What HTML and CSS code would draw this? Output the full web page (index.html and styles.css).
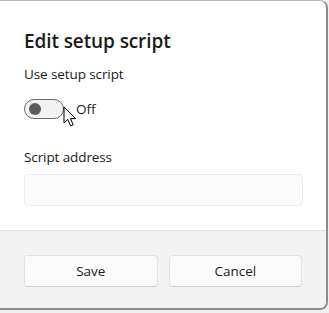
FILE: index.html
```html
<!DOCTYPE html>
<html>
<head>
<meta charset="utf-8">
<link rel="stylesheet" href="styles.css">
</head>
<body>
<div class="dialog">
  <div class="content">
    <h1 class="title">Edit setup script</h1>
    <div class="label">Use setup script</div>
    <div class="toggle-row">
      <span class="toggle"><span class="knob"></span></span>
      <span class="toggle-text">Off</span>
      <svg class="cursor" width="14" height="22" viewBox="0 0 14 22">
        <path d="M1 1 L1 17 L4.8 13.4 L7.6 20 L10.2 18.9 L7.5 12.6 L12.6 12.6 Z" fill="#fff" stroke="#000" stroke-width="1" stroke-linejoin="round"/>
      </svg>
    </div>
    <div class="label addr">Script address</div>
    <div class="input"></div>
  </div>
  <div class="footer">
    <button class="btn">Save</button>
    <button class="btn">Cancel</button>
  </div>
</div>
</body>
</html>
```
FILE: styles.css
```css
* { box-sizing: border-box; }
html, body { margin: 0; padding: 0; }
body {
  width: 329px;
  height: 313px;
  background: #f0f0f0;
  font-family: "Open Sans", "Noto Sans", "Liberation Sans", sans-serif;
  color: #1b1b1b;
  overflow: hidden;
}
.dialog {
  width: 328px;
  height: 310px;
  background: #fff;
  border-top: 1px solid #b8b8b8;
  border-right: 2px solid #8c8c8c;
  border-bottom: 2px solid #8c8c8c;
  border-radius: 0 8px 8px 0;
  display: flex;
  flex-direction: column;
  overflow: hidden;
}
.content {
  padding: 0 24px;
  height: 229px;
  flex: none;
}
.title {
  margin: 0;
  padding-top: 27px;
  font-size: 19px;
  font-weight: 600;
  line-height: 26px;
  letter-spacing: -0.1px;
}
.label {
  margin-top: 10px;
  font-size: 13.5px;
  line-height: 20px;
  letter-spacing: -0.1px;
}
.toggle-row {
  display: flex;
  align-items: center;
  margin-top: 14px;
  height: 22px;
  position: relative;
}
.toggle {
  width: 40px;
  height: 20px;
  border: 1px solid #6a6a6a;
  border-radius: 10px;
  background: #f2f2f2;
  display: flex;
  align-items: center;
  padding-left: 4px;
}
.knob {
  width: 12px;
  height: 12px;
  border-radius: 50%;
  background: #5b5b5b;
}
.toggle-text {
  margin-left: 12px;
  font-size: 13.5px;
}
.cursor {
  position: absolute;
  left: 39px;
  top: 8px;
}
.addr { margin-top: 27px; }
.input {
  margin-top: 7px;
  height: 32px;
  width: 279px;
  border: 1px solid #ececec;
  border-radius: 4px;
  background: #fbfbfb;
}
.footer {
  flex: 1;
  background: #f3f3f3;
  border-top: 1px solid #e3e3e3;
  display: flex;
  gap: 11px;
  padding: 24px 24px 0 24px;
}
.btn {
  width: 134px;
  height: 32px;
  background: #fbfbfb;
  border: 1px solid #e2e2e2;
  border-bottom-color: #cfcfcf;
  border-radius: 4px;
  font-family: inherit;
  font-size: 13.5px;
  color: #1b1b1b;
  padding: 0;
}
```
